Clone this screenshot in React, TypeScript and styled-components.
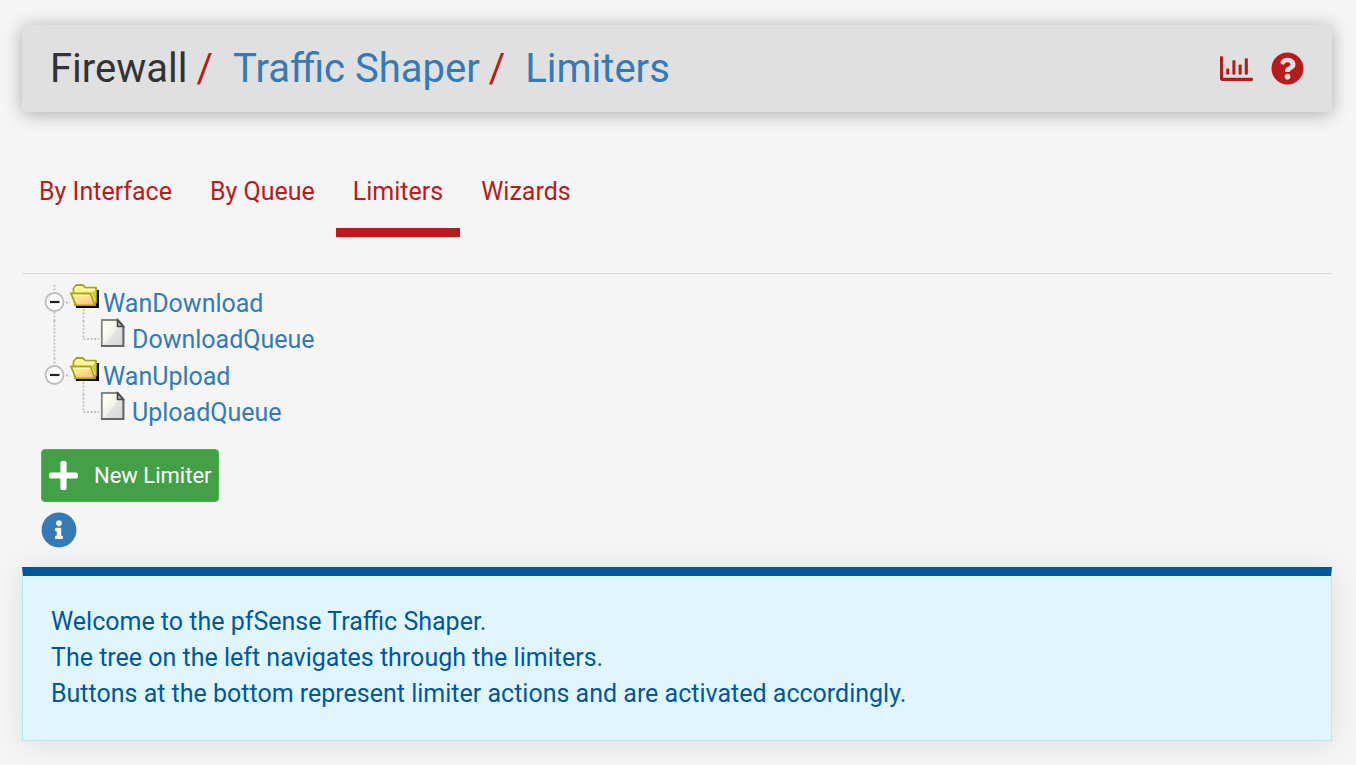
import React from "react";
import styled, { createGlobalStyle } from "styled-components";
import { FaInfoCircle, FaPlus, FaQuestionCircle, FaRegChartBar } from "react-icons/fa";

const red = "#b71c1c";
const blue = "#337ab7";

const GlobalStyle = createGlobalStyle`
  *, *::before, *::after { box-sizing: border-box; }
  body {
    margin: 0;
    background: #f5f5f5;
    color: #333;
    font-family: Roboto, "Liberation Sans", sans-serif;
    font-size: 25px;
    line-height: 36px;
  }
  a { text-decoration: none; }
`;

const Page = styled.main`
  padding: 25px 24px 24px 22px;
`;

const Header = styled.header`
  display: flex;
  align-items: center;
  justify-content: space-between;
  padding: 20px 28px;
  background: #e0e0e0;
  border-radius: 4px;
  box-shadow: 0 2px 18px rgba(0, 0, 0, 0.3);
`;

const Crumbs = styled.h1`
  display: flex;
  margin: 0;
  font-size: 40px;
  font-weight: 400;
  line-height: 47px;
  white-space: pre;
`;

const Slash = styled.span`
  color: ${red};
  padding: 0 20px 0 9px;
`;

const CrumbLink = styled.a`
  color: ${blue};
`;

const HeaderActions = styled.nav`
  display: flex;
  align-items: center;
  gap: 18px;
`;

const ActionLink = styled.a`
  display: flex;
  color: ${red};
  font-size: 33px;
`;

const Tabs = styled.nav`
  display: flex;
  gap: 4px;
  margin-top: 51px;
  padding-bottom: 36px;
  border-bottom: 1px solid #ddd;
`;

const Tab = styled.a<{ $active?: boolean }>`
  padding: 11px 17px 18px;
  border-bottom: 9px solid ${(p) => (p.$active ? red : "transparent")};
  color: ${red};
`;

const Tree = styled.ul`
  display: grid;
  gap: 1px;
  margin: 0;
  padding: 11px 20px 0;
  list-style: none;
`;

const Branch = styled.ul`
  margin: 0;
  padding: 0;
  list-style: none;
`;

const Row = styled.div`
  display: flex;
  height: 36px;
`;

const Toggle = styled.button`
  display: flex;
  padding: 0;
  border: 0;
  background: none;
  cursor: pointer;
`;

const Glyph = styled.svg`
  display: block;
  flex: none;
  overflow: visible;
`;

const TreeLink = styled.a<{ $leaf?: boolean }>`
  padding-top: 1px;
  padding-left: ${(p) => (p.$leaf ? 6 : 3)}px;
  color: ${blue};
`;

const Actions = styled.div`
  display: flex;
  flex-direction: column;
  align-items: flex-start;
  gap: 10px;
  padding: 19px 19px 18px;
`;

const NewButton = styled.button`
  display: flex;
  align-items: center;
  gap: 14px;
  height: 53px;
  padding: 0 6px 0 5px;
  border: 1px solid #4caf50;
  border-radius: 4px;
  background: #43a047;
  color: #fff;
  font: 400 22px/32px Roboto, "Liberation Sans", sans-serif;
  cursor: pointer;
`;

const InfoButton = styled.button`
  display: flex;
  padding: 0;
  border: 0;
  background: none;
  color: ${blue};
  font-size: 36px;
  line-height: 36px;
  padding-bottom: 1px;
  cursor: pointer;
`;

const Notice = styled.section`
  padding: 28px;
  border: 1px solid #b2ebf2;
  border-top: 9px solid #01579b;
  background: #e1f5fe;
  color: #01579b;
  box-shadow: 0 2px 28px rgba(0, 0, 0, 0.1);
`;

const NoticeLine = styled.p`
  margin: 0;
`;

const dots = { stroke: "#bdbdbd", strokeWidth: 1.8, strokeDasharray: "1.8 1.8" };

const ToggleIcon = ({ first }: { first: boolean }) => (
  <Glyph width="28" height="36" viewBox="0 0 28 36" aria-hidden="true">
    <path d={first ? "M12.5 0V7M12.5 27V36" : "M12.5 0V7"} {...dots} />
    <path d="M24 17.5H28" {...dots} />
    <circle cx="12.5" cy="17" r="9" fill="#fff" stroke="#bcbcbc" strokeWidth="1.8" />
    <path d="M8 17H17.5" stroke="#222" strokeWidth="2.2" />
  </Glyph>
);

const FolderIcon = () => (
  <Glyph width="30" height="36" viewBox="0 0 30 36" aria-hidden="true">
    <defs>
      <linearGradient id="folderFront" x1="0" y1="0" x2="0.6" y2="1">
        <stop offset="0" stopColor="#f7f27c" />
        <stop offset="0.55" stopColor="#fbe08e" />
        <stop offset="1" stopColor="#fbbf86" />
      </linearGradient>
    </defs>
    <path d="M13.5 24V36" {...dots} />
    <path d="M5 23H29V5H26V19Z" fill="#0a0a00" />
    <path d="M3.5 10V3.5L6.5 0H12.5L15.5 2.6H26V17L24.5 20H5Z" fill="#f9f68a" stroke="#a8a21c" strokeWidth="1.8" />
    <path d="M5 4.5L7.5 1.8H11.5L14.5 4.5H24.5" fill="none" stroke="#fffbc0" strokeWidth="1.6" />
    <path d="M1 8.5H20.5L25 20.5H6Z" fill="url(#folderFront)" stroke="#a8a21c" strokeWidth="1.8" />
    <path d="M3 10.4H19.5" stroke="#fffbc0" strokeWidth="1.4" />
    <path d="M21.5 7.5L26 18V5Z" fill="#d1c93c" />
    <path d="M6 22H28" stroke="#0a0a00" strokeWidth="2" />
  </Glyph>
);

const TrunkIcon = ({ line }: { line: boolean }) => (
  <Glyph width="28" height="36" viewBox="0 0 28 36" aria-hidden="true">
    {line && <path d="M12.5 0V37" {...dots} />}
  </Glyph>
);

const ElbowIcon = () => (
  <Glyph width="30" height="36" viewBox="0 0 30 36" aria-hidden="true">
    <path d="M13.5 0V18H29" fill="none" {...dots} />
  </Glyph>
);

const PageIcon = () => (
  <Glyph width="26" height="36" viewBox="0 0 26 36" aria-hidden="true">
    <defs>
      <linearGradient id="pageFill" x1="0" y1="0" x2="1" y2="1">
        <stop offset="0.2" stopColor="#fffef0" />
        <stop offset="0.5" stopColor="#f3f3ec" />
        <stop offset="0.56" stopColor="#e2e2e2" />
        <stop offset="1" stopColor="#d6d6d6" />
      </linearGradient>
    </defs>
    <path d="M1.8 -1H18L23.4 5V25H1.8Z" fill="url(#pageFill)" stroke="#858585" strokeWidth="1.8" />
    <path d="M17.5 -1V5.5H23.4Z" fill="#bbb" stroke="#444" strokeWidth="1.6" />
    <path d="M1 25H24.3M23.4 5V26" stroke="#666" strokeWidth="1.8" />
  </Glyph>
);

const tabs = ["By Interface", "By Queue", "Limiters", "Wizards"];

const limiters = [
  { name: "WanDownload", queues: ["DownloadQueue"] },
  { name: "WanUpload", queues: ["UploadQueue"] },
];

const notice = [
  "Welcome to the pfSense Traffic Shaper.",
  "The tree on the left navigates through the limiters.",
  "Buttons at the bottom represent limiter actions and are activated accordingly.",
];

export default function App() {
  return (
    <>
      <GlobalStyle />
      <Page>
        <Header>
          <Crumbs>
            <span>Firewall</span>
            <Slash>/</Slash>
            <CrumbLink href="#shaper">Traffic Shaper</CrumbLink>
            <Slash>/</Slash>
            <CrumbLink href="#limiters">Limiters</CrumbLink>
          </Crumbs>
          <HeaderActions>
            <ActionLink href="#status" aria-label="Related status">
              <FaRegChartBar />
            </ActionLink>
            <ActionLink href="#help" aria-label="Help">
              <FaQuestionCircle />
            </ActionLink>
          </HeaderActions>
        </Header>

        <Tabs>
          {tabs.map((tab) => (
            <Tab key={tab} href="#tab" $active={tab === "Limiters"}>
              {tab}
            </Tab>
          ))}
        </Tabs>

        <Tree>
          {limiters.map((limiter, index) => (
            <li key={limiter.name}>
              <Row>
                <Toggle aria-label={`Collapse ${limiter.name}`}>
                  <ToggleIcon first={index === 0} />
                </Toggle>
                <FolderIcon />
                <TreeLink href="#limiter">{limiter.name}</TreeLink>
              </Row>
              <Branch>
                {limiter.queues.map((queue) => (
                  <li key={queue}>
                    <Row>
                      <TrunkIcon line={index < limiters.length - 1} />
                      <ElbowIcon />
                      <PageIcon />
                      <TreeLink href="#queue" $leaf>
                        {queue}
                      </TreeLink>
                    </Row>
                  </li>
                ))}
              </Branch>
            </li>
          ))}
        </Tree>

        <Actions>
          <NewButton>
            <FaPlus size={33} />
            New Limiter
          </NewButton>
          <InfoButton aria-label="Show information">
            <FaInfoCircle />
          </InfoButton>
        </Actions>

        <Notice>
          {notice.map((line) => (
            <NoticeLine key={line}>{line}</NoticeLine>
          ))}
        </Notice>
      </Page>
    </>
  );
}
